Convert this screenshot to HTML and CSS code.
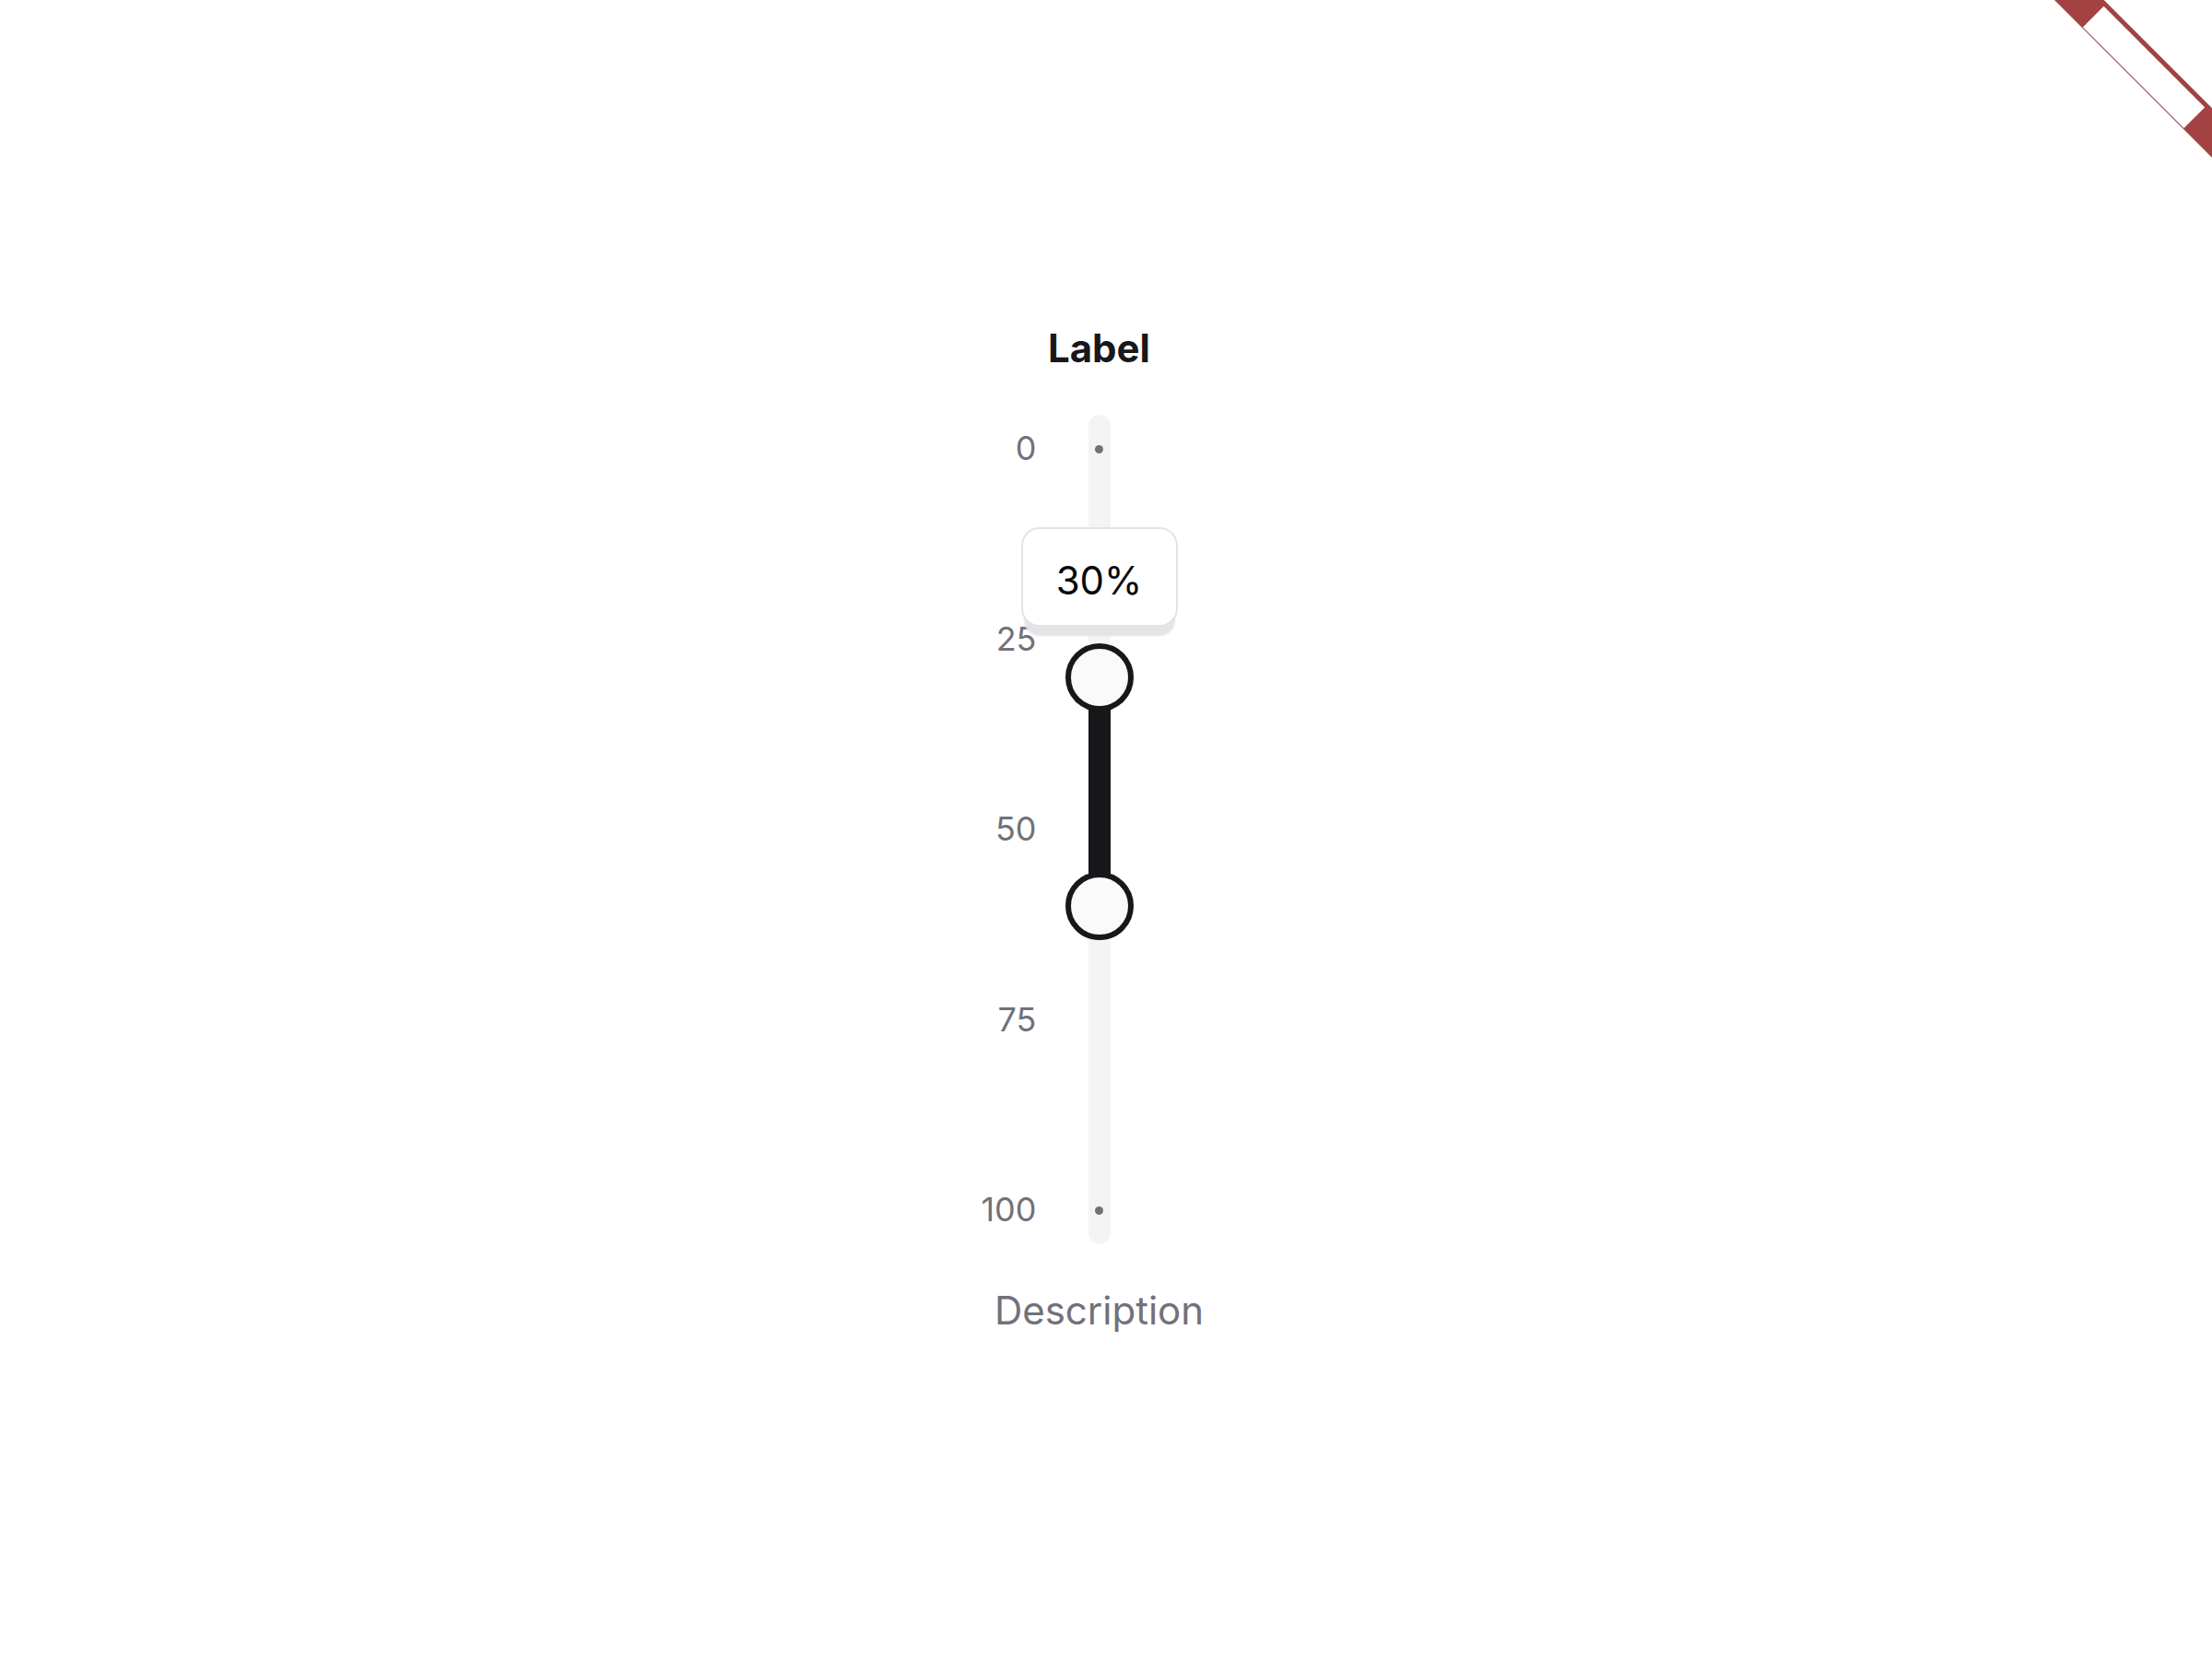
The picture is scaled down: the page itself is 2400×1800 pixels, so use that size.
FILE: index.html
```html
<!DOCTYPE html>
<html lang="en">
<head>
<meta charset="utf-8">
<title>Vertical range slider</title>
<link rel="stylesheet" href="styles.css">
</head>
<body>
<div class="ribbon-wrap" aria-hidden="true">
  <div class="ribbon"><div class="ribbon-inner"></div></div>
</div>
<main class="page">
  <div class="field">
    <div class="label">Label</div>
    <div class="slider">
      <div class="ticks">
        <span class="tick">0</span>
        <span class="tick">25</span>
        <span class="tick">50</span>
        <span class="tick">75</span>
        <span class="tick">100</span>
      </div>
      <div class="track">
        <div class="marks"><span class="mark"></span><span class="mark"></span></div>
        <div class="range" style="top: calc(37px + (100% - 74px) * 0.3); height: calc((100% - 74px) * 0.3);"></div>
        <div class="thumb" style="top: calc((100% - 74px) * 0.3);"></div>
        <div class="thumb" style="top: calc((100% - 74px) * 0.6);"></div>
        <div class="tooltip" style="top: calc((100% - 74px) * 0.3 - 126px);">30%</div>
      </div>
      <div class="spacer"></div>
    </div>
    <div class="description">Description</div>
  </div>
</main>
</body>
</html>
```
FILE: styles.css
```css
html, body {
  margin: 0;
  padding: 0;
  background: #ffffff;
}

body {
  font-family: Inter, "Noto Sans", "Liberation Sans", sans-serif;
  color: #18181b;
}

.page {
  min-height: 100vh;
  box-sizing: border-box;
  padding-right: 15px;
  display: flex;
  align-items: center;
  justify-content: center;
}

.field {
  display: flex;
  flex-direction: column;
  align-items: center;
  gap: 42px;
}

.label {
  font-size: 42px;
  line-height: 60px;
  font-weight: 700;
  color: #18181b;
}

.description {
  font-size: 42px;
  line-height: 60px;
  font-weight: 400;
  color: #71717a;
}

.slider {
  display: grid;
  grid-template-columns: 120px 24px 120px;
  column-gap: 56px;
  height: 900px;
}

.ticks {
  display: flex;
  flex-direction: column;
  justify-content: space-between;
  align-items: flex-end;
}

.tick {
  display: block;
  height: 74px;
  line-height: 72.5px;
  font-size: 36px;
  color: #71717a;
}

.track {
  position: relative;
  width: 24px;
  height: 100%;
  border-radius: 12px;
  background: #f4f4f5;
}

.marks {
  height: 100%;
  box-sizing: border-box;
  padding: 32.5px 0;
  display: flex;
  flex-direction: column;
  justify-content: space-between;
  align-items: center;
}

.mark {
  display: block;
  width: 9px;
  height: 9px;
  border-radius: 50%;
  background: #71717a;
}

.range {
  position: absolute;
  left: 0;
  right: 0;
  background: #18181b;
}

.thumb {
  position: absolute;
  left: 50%;
  margin-left: -37px;
  width: 74px;
  height: 74px;
  box-sizing: border-box;
  border: 6px solid #18181b;
  border-radius: 50%;
  background: #fafafa;
  z-index: 2;
}

.tooltip {
  position: absolute;
  left: 50%;
  margin-left: -85px;
  width: 170px;
  height: 108px;
  box-sizing: border-box;
  padding-top: 8px;
  border: 2px solid #e4e4e7;
  border-radius: 20px;
  background: #ffffff;
  box-shadow: 0 13px 2px -3px #e4e4e7;
  font-size: 42px;
  line-height: 96px;
  text-align: center;
  color: #09090b;
  z-index: 3;
}

.ribbon-wrap {
  position: absolute;
  top: 0;
  right: 0;
  width: 200px;
  height: 200px;
  overflow: hidden;
  pointer-events: none;
}

.ribbon {
  position: absolute;
  left: -21.75px;
  top: 53px;
  width: 300px;
  height: 37.5px;
  background: #a24242;
  transform: rotate(45deg);
}

.ribbon-inner {
  margin-top: 5px;
  margin-left: 72px;
  width: 155px;
  height: 31.5px;
  background: #ffffff;
}
```
